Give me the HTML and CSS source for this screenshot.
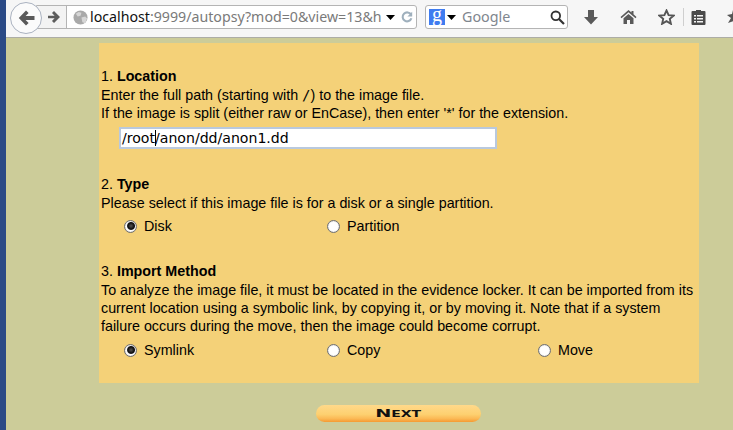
FILE: index.html
```html
<!DOCTYPE html>
<html lang="en">
<head>
<meta charset="utf-8">
<title>Autopsy</title>
<link rel="stylesheet" href="styles.css">
</head>
<body>
<div class="strip"></div>
<div class="window">
  <header class="toolbar">
    <div class="back">
      <svg width="17" height="16" viewBox="0 0 17 16"><path d="M8 0.500 0.800 8 8 15.500l2.600-2.600-3-3H16.500V6.100H7.600l3-3z" fill="#5a5a5a"/></svg>
    </div>
    <div class="urlbar">
      <div class="forward">
        <svg width="14" height="14" viewBox="0 0 14 14"><path d="M7 1l6 6-6 6-2-2 2.600-2.700H1V5.700h6.600L5 3z" fill="#5c5c5c"/></svg>
      </div>
      <svg class="globe" width="15" height="15" viewBox="0 0 16 16"><circle cx="8" cy="8" r="7.500" fill="#a9a9a9"/><path d="M3 4l3-2 3 1-1 3-3 1zM9 8l4-1 2 2-2 5-3-1z" fill="#d6d6d6"/></svg>
      <div class="url"><span class="host">localhost</span>:9999/autopsy?mod=0&amp;view=13&amp;h</div>
      <svg class="drop" width="9" height="5" viewBox="0 0 9 5"><path d="M0 0h9L4.500 5z"/></svg>
      <svg class="reload" width="12" height="12" viewBox="0 0 15 15"><path d="M12.500 4.500A5.600 5.600 0 1 0 13 9" fill="none" stroke="#9fb0bd" stroke-width="2.600"/><path d="M14 1v6H8z" fill="#9fb0bd"/></svg>
    </div>
    <div class="search">
      <div class="engine">g</div>
      <svg class="drop" width="9" height="5" viewBox="0 0 9 5"><path d="M0 0h9L4.500 5z"/></svg>
      <div class="query">Google</div>
      <svg class="lens" width="15" height="15" viewBox="0 0 15 15"><circle cx="5.800" cy="5.800" r="4.300" fill="none" stroke="#333" stroke-width="1.800"/><path d="M9 9l5 5" stroke="#333" stroke-width="2.200"/></svg>
    </div>
    <div class="tools">
      <svg width="16" height="16" viewBox="0 0 16 16"><path d="M5 1h6v7h4l-7 7.500L1 8h4z" fill="#5a5a5a"/></svg>
      <svg width="17" height="16" viewBox="0 0 17 16"><path d="M8.500 1 0.500 8l1 1.200 7-6 7 6 1-1.200-3-2.700V2h-2v1.500zM3.500 9.200 8.500 5l5 4.200V15H10v-4H7v4H3.500z" fill="#5a5a5a"/></svg>
      <svg width="17" height="16" viewBox="0 0 17 16"><path d="M8.500 1.500l2.100 4.600 5 .5-3.800 3.300 1.100 4.900-4.400-2.600-4.400 2.600 1.100-4.900-3.800-3.300 5-.5z" fill="none" stroke="#555" stroke-width="1.900" stroke-linejoin="miter"/></svg>
      <div class="divider"></div>
      <svg width="15" height="16" viewBox="0 0 15 16"><path d="M5 2V1h5v1h3.500a1 1 0 0 1 1 1v12a1 1 0 0 1-1 1h-12a1 1 0 0 1-1-1V3a1 1 0 0 1 1-1z" fill="#4a4a4a"/><path d="M3 6h2v1.500H3zM6 6h6v1.500H6zM3 9h2v1.500H3zM6 9h6v1.500H6zM3 12h2v1.500H3zM6 12h6v1.500H6z" fill="#f4f4f4"/></svg>
      <svg class="clipped" width="14" height="16" viewBox="0 0 14 16"><path d="M7 1l2 5 5-1-3 4 2 6-5-3-6 2 3-5-4-3 5-1z" fill="#555"/></svg>
    </div>
  </header>

  <main class="page">
    <form class="panel">
      <section class="block">
        <p class="head">1. <b>Location</b></p>
        <p>Enter the full path (starting with <code>/</code>) to the image file.</p>
        <p>If the image is split (either raw or EnCase), then enter '*' for the extension.</p>
        <div class="field"><span>/root</span><span class="caret"></span><span>/anon/dd/anon1.dd</span></div>
      </section>
      <section class="block type">
        <p class="head">2. <b>Type</b></p>
        <p>Please select if this image file is for a disk or a single partition.</p>
        <div class="radios">
          <label class="radio"><span class="dot on"></span>Disk</label>
          <label class="radio"><span class="dot"></span>Partition</label>
        </div>
      </section>
      <section class="block import">
        <p class="head">3. <b>Import Method</b></p>
        <p>To analyze the image file, it must be located in the evidence locker. It can be imported from its current location using a symbolic link, by copying it, or by moving it. Note that if a system failure occurs during the move, then the image could become corrupt.</p>
        <div class="radios">
          <label class="radio"><span class="dot on"></span>Symlink</label>
          <label class="radio"><span class="dot"></span>Copy</label>
          <label class="radio"><span class="dot"></span>Move</label>
        </div>
      </section>
    </form>
    <div class="next"><span>Next</span></div>
  </main>
</div>
</body>
</html>
```

FILE: styles.css
```css
* { box-sizing: border-box; }
html, body { margin: 0; height: 100%; }
body {
  display: flex;
  height: 430px;
  overflow: hidden;
  background: #cccc99;
  font-family: "Liberation Sans", Arial, sans-serif;
  color: #000;
}
.strip { width: 6px; flex: none; background: #2b4a86; }
.window { flex: 1; min-width: 0; display: flex; flex-direction: column; }

.toolbar {
  height: 38px;
  flex: none;
  display: flex;
  align-items: flex-start;
  padding: 5px 0 0 4px;
  background: #f6f6f6;
  border-bottom: 1px solid #adada6;
}
.back {
  width: 32px;
  height: 32px;
  margin-top: -3px;
  border-radius: 50%;
  border: 1px solid #aab2c0;
  background: #fbfbfb;
  display: flex;
  align-items: center;
  justify-content: center;
  position: relative;
  z-index: 1;
  flex: none;
}
.urlbar {
  width: 381px;
  height: 24px;
  margin-left: -6px;
  flex: none;
  display: flex;
  align-items: center;
  background: #fff;
  border: 1px solid #b4b4b4;
  border-radius: 0 3px 3px 0;
}
.forward {
  width: 30px;
  height: 22px;
  flex: none;
  padding-left: 10px;
  display: flex;
  align-items: center;
  background: #f3f3f3;
  border-right: 1px solid #b4b4b4;
}
.globe { margin-left: 6px; flex: none; }
.url {
  width: 294px;
  margin-left: 2px;
  flex: none;
  white-space: nowrap;
  font: 14.2px/22px "Noto Sans", sans-serif;
  color: #7a7a7a;
}
.host { color: #111; }
.urlbar .drop { margin-left: 2px; flex: none; }
.reload { margin-left: 6px; flex: none; }
.search {
  width: 143px;
  height: 24px;
  margin-left: 8px;
  flex: none;
  display: flex;
  align-items: center;
  padding-left: 3px;
  background: #fff;
  border: 1px solid #b4b4b4;
  border-radius: 3px;
}
.engine {
  width: 16px;
  height: 16px;
  flex: none;
  background: #3f7cf0;
  color: #fff;
  font: 20px/10px "Liberation Serif", serif;
  text-align: center;
}
.search .drop { margin-left: 2px; flex: none; }
.query {
  width: 88px;
  margin-left: 6px;
  font: 14.3px/22px "Noto Sans", sans-serif;
  color: #80868e;
}
.lens { flex: none; }
.tools {
  flex: 1;
  display: flex;
  align-items: center;
  height: 24px;
  min-width: 0;
  overflow: hidden;
  padding-left: 15px;
}
.tools svg { flex: none; }
.tools svg + svg { margin-left: 21px; }
.divider { width: 1px; height: 18px; margin: 0 7px 0 8px; background: #cfcfcf; flex: none; }
.tools .divider + svg { margin-left: 0; }
.tools .clipped { margin-left: 20px; }

.page {
  flex: 1;
  padding: 5px 0 0 93px;
}
.panel {
  width: 600px;
  height: 340px;
  padding: 24px 0 0 2px;
  background: #f4d178;
  font-size: 14.3px;
  line-height: 18px;
}
.panel p { margin: 0; }
.panel .head { margin-bottom: 1px; }
.panel code { font: 14px/1 "DejaVu Sans Mono", monospace; }
.field {
  width: 378px;
  height: 22px;
  margin: 5px 0 0 18px;
  padding-left: 1px;
  display: flex;
  align-items: center;
  background: #fff;
  border: 2px solid #b9c9de;
  font: 14.1px/18px "DejaVu Sans", sans-serif;
  white-space: nowrap;
}
.caret { width: 1px; height: 16px; background: #000; margin-right: -1px; }
.block.type { margin-top: 26px; }
.block.import { margin-top: 27px; }
.radios {
  display: grid;
  grid-template-columns: 203px 211px 1fr;
  margin: 5px 0 0 23px;
}
.block.import .radios { margin-top: 6px; }
.radio { display: flex; align-items: center; }
.dot {
  width: 13px;
  height: 13px;
  margin-right: 7px;
  border-radius: 50%;
  border: 1px solid #6f6f6f;
  background: #fff;
  flex: none;
  box-shadow: inset 0 0 1px #999;
}
.dot.on { background: radial-gradient(circle at 55% 45%, #555 0, #111 3px, #1a1a1a 3.500px, #fff 4.500px); }

.next {
  width: 165px;
  height: 17px;
  margin: 22px 0 0 217px;
  border-radius: 9px;
  background: linear-gradient(#ffd98a 0, #fdd070 55%, #fbb955 80%, #f59a32 100%);
  text-align: center;
  line-height: 14px;
}
.next span {
  display: inline-block;
  transform: scaleX(1.75);
  font: bold 11px/14px "DejaVu Sans", sans-serif;
  font-variant: small-caps;
  color: #111;
}
```
